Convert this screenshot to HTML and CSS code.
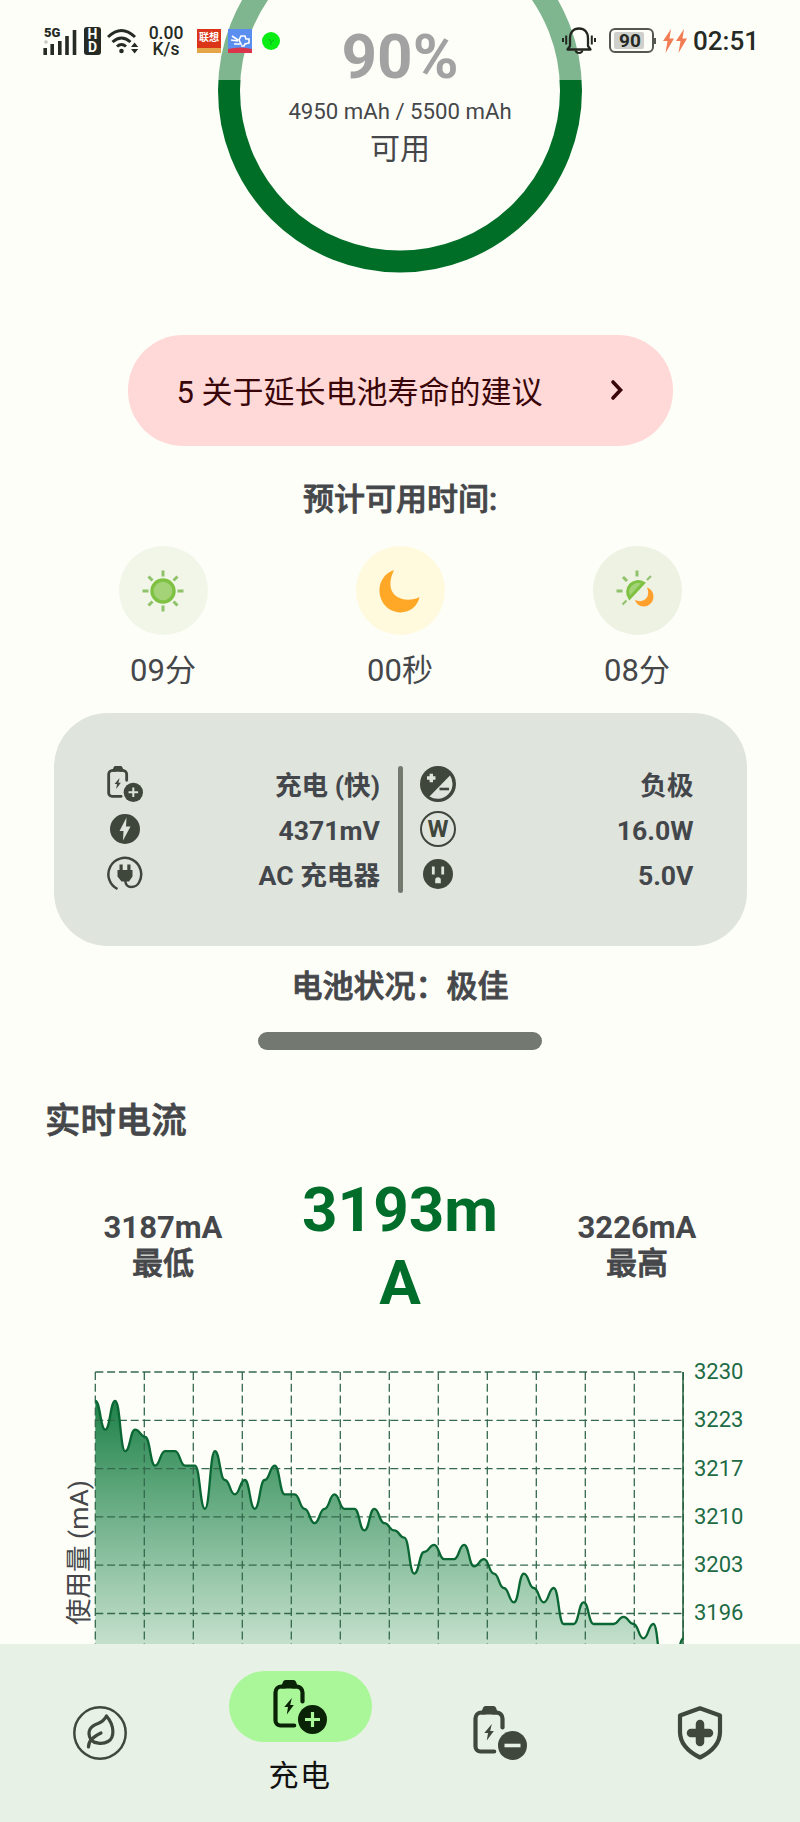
FILE: index.html
```html
<!DOCTYPE html>
<html lang="zh-CN">
<head>
<meta charset="utf-8">
<title>充电</title>
<link rel="stylesheet" href="styles.css">
</head>
<body>
<svg class="defs" width="0" height="0">
  <symbol id="battery" viewBox="0 0 54 54">
    <path d="M12 6.500H8.500a6 6 0 0 0-6 6v28a5 5 0 0 0 5 5h13.700M20 6.500h3.500a6 6 0 0 1 6 6v9" fill="none" stroke="currentColor" stroke-width="4.200" stroke-linecap="round"/>
    <path d="M8 8.500V5h.8L10 1.800A3 3 0 0 1 12.500 0h8A3 3 0 0 1 23 1.800L24.200 5h1.300v3.500z" fill="currentColor"/>
    <path d="M18.800 18l-7.500 9h3.700l-1.200 7.500 7-9.500h-3.600z" fill="currentColor"/>
    <circle cx="39.500" cy="39.500" r="14.500" fill="currentColor"/>
  </symbol>
</svg>
<div class="screen">
  <main class="page">
    <section class="gauge">
      <svg class="ring" width="800" height="290"><circle cx="400" cy="90.500" r="171" fill="none" stroke="#006e27" stroke-width="22"/></svg>
      <div class="percent">90%</div>
      <div class="capacity">4950 mAh / 5500 mAh</div>
      <div class="usable">可用</div>
    </section>

    <div class="tips"><span>5 关于延长电池寿命的建议</span>
      <svg width="14" height="22" viewBox="0 0 14 22"><path d="M3 3l7.500 8L3 19" fill="none" stroke="#3a0508" stroke-width="3.600" stroke-linecap="round"/></svg>
    </div>

    <h2 class="estimate">预计可用时间:</h2>
    <section class="times">
      <div class="time"><div class="disc sun">
        <svg width="44" height="44" viewBox="-22 -22 44 44"><g stroke="#8fc26a" stroke-width="3"><path d="M0-20.500v6M0 20.500v-6M-20.500 0h6M20.500 0h-6M-14.500-14.500l4 4M14.500 14.500l-4-4M-14.500 14.500l4-4M14.500-14.500l-4 4"/></g><circle r="11" fill="#a3d277" stroke="#7fc243" stroke-width="3.400"/></svg>
      </div><span>09分</span></div>
      <div class="time"><div class="disc moon">
        <svg width="44" height="44" viewBox="-22 -22 44 44"><path d="M-6-21C-25-14-24 9-11 18C2 26 17 19 19.500 6C6 13-19 7-6-21z" fill="#ffa726"/></svg>
      </div><span>00秒</span></div>
      <div class="time"><div class="disc mixed">
        <svg width="44" height="44" viewBox="-22 -22 44 44"><path d="M-7.500 7A10.500 10.500 0 0 1 6.500-8z" fill="#a3d277" stroke="#7fc243" stroke-width="3"/><path d="M0-20.500v6M-20.500 0h6M-14-14l4 4" stroke="#8fc26a" stroke-width="3"/><path d="M-14.500 13.500l4-4M10-11l4-4" stroke="#8fc26a" stroke-width="2"/><path d="M10-3.500C20 0 18 15 7 15.500C2 15.500-1 12-2 9C7 13 14 6 10-3.500z" fill="#ff9f2c"/></svg>
      </div><span>08分</span></div>
    </section>

    <section class="card">
      <div class="facts">
        <div class="fact"><svg class="icon" width="36" height="36"><use href="#battery"/><path d="M26.300 21.500v9.600M21.500 26.300h9.600" stroke="#dfe4dc" stroke-width="2"/></svg><b>充电 (快)</b></div>
        <div class="fact"><svg class="icon" width="36" height="36" viewBox="-18 -18 36 36"><circle r="15" fill="currentColor"/><path d="M1.500-11.500L-5.500 2h4l-.500 9.500L5.500-2.500h-4.500z" fill="#dfe4dc"/></svg><b>4371mV</b></div>
        <div class="fact"><svg class="icon" width="36" height="36" viewBox="-18 -18 36 36"><path d="M-7.500 15A16.400 16.400 0 1 1 14 8.500C11 14 1 15.500.300 7" fill="none" stroke="currentColor" stroke-width="2.500"/><path d="M-7.500-4h2v-5.500h3.200V-4h4.600v-5.500h3.200V-4h2V2.500L4 7.500h-7.500l-4-5z" fill="currentColor"/></svg><b>AC 充电器</b></div>
      </div>
      <i class="divider"></i>
      <div class="facts">
        <div class="fact"><svg class="icon" width="36" height="36" viewBox="-18 -18 36 36"><circle r="18" fill="currentColor"/><path d="M12-8.500A15 15 0 0 1-8.500 12.500z" fill="#dfe4dc"/><path d="M1.500 5h9.500" stroke="currentColor" stroke-width="2.600"/><path d="M-11-6h8.500M-6.700-10.200v8.500" stroke="#dfe4dc" stroke-width="3.400"/></svg><b>负极</b></div>
        <div class="fact"><span class="watt">W</span><b>16.0W</b></div>
        <div class="fact"><svg class="icon" width="36" height="36" viewBox="-18 -18 36 36"><circle r="15" fill="currentColor"/><path d="M-4.700-7.500V.500M4.700-7.500V.500" stroke="#dfe4dc" stroke-width="2.800"/><path d="M-2.800 9.300V6a2.800 2.800 0 0 1 5.600 0v3.300z" fill="#dfe4dc"/></svg><b>5.0V</b></div>
      </div>
    </section>

    <h2 class="health">电池状况：极佳</h2>
    <div class="healthbar"></div>

    <h1 class="section">实时电流</h1>
    <section class="current">
      <div class="bound">3187mA<br><span>最低</span></div>
      <div class="now">3193mA</div>
      <div class="bound">3226mA<br><span>最高</span></div>
    </section>

    <section class="chart">
      <div class="unit">使用量 (mA)</div>
      <svg class="plot" width="592" height="284" viewBox="93 1360 592 284">
        <defs><linearGradient id="fade" gradientUnits="userSpaceOnUse" x1="0" y1="1400" x2="0" y2="1644"><stop offset="0" stop-color="#007030" stop-opacity=".88"/><stop offset="1" stop-color="#087b3b" stop-opacity=".23"/></linearGradient></defs>
        <path id="area" fill="url(#fade)"/>
        <path id="grid" fill="none" stroke="#34694d" stroke-width="1.300" stroke-dasharray="8 3.800"/>
        <path d="M683 1372V1644" stroke="#23613f" stroke-width="1.500"/>
        <path id="line" fill="none" stroke="#0a6633" stroke-width="2.300"/>
      </svg>
      <div class="scale"><span>3230</span><span>3223</span><span>3217</span><span>3210</span><span>3203</span><span>3196</span></div>
    </section>
  </main>

  <header class="status">
    <div class="left">
      <div class="signal"><small>5G</small><svg width="34" height="28" viewBox="0 0 34 28"><path d="M2.200 21v7M9.200 17v11M16.800 14v14M24 9v19M31.500 3v25" stroke="#262a24" stroke-width="3.600"/><circle cx="3" cy="15" r="1.800" fill="#c4c6c0"/></svg></div>
      <div class="hd"><span>H</span><span>D</span></div>
      <svg class="wifi" width="32" height="28" viewBox="0 0 32 28"><g fill="none" stroke="#262a24" stroke-width="3"><path d="M1 10Q14.500-3 28 10M5.500 15Q14.500 7 23.500 15M10 19.500Q14.500 15.500 19 19.500" /></g><circle cx="14.500" cy="24" r="2.300" fill="#262a24"/><path d="M24 20l3.600-4.500 3.600 4.500zM24 22l3.600 4.500 3.600-4.500z" fill="#262a24"/></svg>
      <div class="rate"><span>0.00</span><span>K/s</span></div>
      <div class="app red"><span>联想</span></div>
      <div class="app blue"><svg width="24" height="24"><path d="M4 7l6 4M3 11l7 1M6 15h7l-2-4 2-4h4l1 3h3v4l-4 1-1 2h-3" fill="none" stroke="#fff" stroke-width="1.600"/><path d="M0 20q12-3 24 0v4H0z" fill="#d9364c"/></svg></div>
      <svg class="dot" width="18" height="18"><circle cx="9" cy="9" r="9" fill="#0aed14"/><path d="M7 7l2 3 3-2M9 10v3" stroke="#09b41b" fill="none"/></svg>
    </div>
    <div class="right">
      <svg width="34" height="28" viewBox="0 0 34 28"><path d="M5.500 22.500L8 19v-7.500C8 5 11.500 1.500 17 1.500S26 5 26 11.500V19l2.500 3.500z" fill="none" stroke="#22261f" stroke-width="2.300" stroke-linejoin="round"/><path d="M13.500 23.500a3.700 3.700 0 0 0 7 0M4.200 8.500v9M1 11v4M29.800 8.500v9M33 11v4" fill="none" stroke="#22261f" stroke-width="2"/></svg>
      <div class="battery"><span>90</span></div>
      <svg class="bolts" width="24" height="24" viewBox="0 0 24 24"><path d="M8 0L0 12h4.500L2.500 24 11 9.500H6.500zM21 0L13 12h4.500l-2 12L24 9.500h-4.500z" fill="#f27d55"/></svg>
      <time>02:51</time>
    </div>
  </header>

  <nav class="nav">
    <a><svg width="54" height="54" viewBox="-27 -27 54 54"><g fill="none" stroke="currentColor"><circle r="25.700" stroke-width="2.500"/><path d="M-11.500 14C-11.500 8-8 4.500 1 0M-9 7C-14-2-9-7-2-9.500Q4-12 6.500-17C15-7 14.500 5 8 8.500C2 12-6 10-9 7" stroke-width="3.200" stroke-linecap="round" stroke-linejoin="round"/></g></svg></a>
    <a class="active"><span class="pill"><svg width="54" height="54"><use href="#battery"/><path d="M39.500 32v15M32 39.500h15" stroke="#a9f798" stroke-width="3.200"/></svg></span><em>充电</em></a>
    <a><svg width="54" height="54"><use href="#battery"/><path d="M31.500 39.500h16" stroke="#e8f1e6" stroke-width="3.600"/></svg></a>
    <a><svg width="54" height="54"><path d="M27 2.300L47 9.500V26C47 37.500 38 46 27 51.500C16 46 7 37.500 7 26V9.500z" fill="none" stroke="currentColor" stroke-width="4.200" stroke-linejoin="round"/><path d="M27 18v18M18 27h18" stroke="currentColor" stroke-width="8.500" stroke-linecap="round"/></svg></a>
  </nav>
</div>
<script src="chart.js"></script>
</body>
</html>
```

FILE: styles.css
```css
* { box-sizing: border-box; }
body { margin: 0; background: #fdfef8; color: #45474a; font-family: Roboto, "Noto Sans CJK SC", sans-serif; }
h1, h2 { margin: 0; font-weight: 500; -webkit-text-stroke: .8px currentColor; }
svg { display: block; flex: none; }
.defs { position: absolute; }
.screen { position: relative; width: 800px; height: 1822px; overflow: hidden; }
.page { display: flex; flex-direction: column; align-items: center; }

.gauge { position: relative; width: 800px; height: 335px; padding-top: 22px; text-align: center; }
.ring { position: absolute; left: 0; top: 0; }
.percent { font-size: 62px; line-height: 70px; font-weight: 700; }
.capacity { font-size: 22.200px; line-height: 38px; }
.usable { font-size: 30px; line-height: 37px; }

.tips { display: flex; justify-content: space-between; align-items: center; width: 545px; height: 111px; padding: 0 49px 2px; border-radius: 55px; background: #ffd9d7; color: #3a0508; font-size: 31px; }
.estimate { margin-top: 34px; font-size: 31px; line-height: 40px; }
.times, .current { display: flex; width: 711px; }
.times { margin-top: 26px; }
.time { flex: 1; display: flex; flex-direction: column; align-items: center; gap: 16px; font-size: 31px; line-height: 40px; }
.disc { width: 89px; height: 89px; border-radius: 50%; display: flex; align-items: center; justify-content: center; }
.sun { background: #f1f6e9; }
.moon { background: #fffadd; }
.mixed { background: #edf2e2; }

.card { display: flex; width: 693px; height: 233px; margin-top: 22px; padding: 53px; border-radius: 54px; background: #dfe4dc; }
.facts { flex: 1; display: flex; flex-direction: column; gap: 9px; }
.fact { height: 36px; display: flex; align-items: center; justify-content: space-between; color: #3f463c; }
.fact b { padding-top: 4px; color: #43464a; font-size: 26.600px; line-height: 36px; font-weight: 700; }
.divider { width: 5px; height: 127px; margin: 0 17px 0 18px; border-radius: 3px; background: #73796f; }
.watt { width: 36px; height: 36px; border: 2px solid; border-radius: 50%; font-size: 24px; line-height: 32px; font-weight: 700; text-align: center; }

.health { margin-top: 21px; font-size: 31px; line-height: 40px; }
.healthbar { width: 284px; height: 18px; margin-top: 25px; border-radius: 9px; background: #737970; }
.section { align-self: flex-start; margin: 51px 0 0 45px; font-size: 35.400px; line-height: 40px; }
.current { margin-top: 25px; height: 160px; align-items: center; }
.current > * { flex: none; width: 237px; text-align: center; }
.bound { font-size: 31px; line-height: 36.500px; font-weight: 700; }
.bound span { font-weight: 500; -webkit-text-stroke: .8px currentColor; }
.now { padding: 0 18px; color: #006d2a; font-size: 62px; line-height: 73px; font-weight: 700; word-break: break-all; }

.chart { display: flex; width: 800px; height: 284px; margin-top: 34px; padding-left: 65px; }
.unit { width: 28px; height: 265px; font-size: 26.500px; line-height: 28px; writing-mode: vertical-rl; text-orientation: sideways; transform: rotate(180deg); }
.scale { display: flex; flex-direction: column; margin: -12px 0 0 9px; color: #1d6b45; font-size: 22px; line-height: 48.300px; }

.status { position: absolute; left: 0; top: 0; width: 800px; height: 80px; display: flex; justify-content: space-between; padding: 26px 41px 0 43px; background: rgba(253, 254, 248, .5); color: #262a24; }
.left, .right { display: flex; align-items: center; height: 29px; }
.signal { position: relative; }
.signal small { position: absolute; left: 1px; top: 0; font-size: 13px; line-height: 11px; font-weight: 900; }
.hd { width: 17px; height: 28px; margin: 0 6px 0 7px; padding: 1px 0; border-radius: 3px; background: #262a24; color: #fdfef8; font-size: 14px; line-height: 13px; font-weight: 700; text-align: center; display: flex; flex-direction: column; }
.rate { display: flex; flex-direction: column; width: 36px; margin-left: 9px; font-size: 17.500px; line-height: 16px; font-weight: 500; text-align: center; }
.app { width: 24px; height: 24px; }
.red { margin-left: 13px; background: #da3519; border-bottom: 5px solid #e5a548; color: #fff; font-size: 10px; line-height: 18px; font-weight: 700; text-align: center; }
.blue { margin-left: 7px; background: #5a8ff0; }
.dot { margin-left: 10px; }
.battery { position: relative; width: 45px; height: 25px; margin-left: 13px; padding: 2px 8px 2px 3px; border: 2px solid #555852; border-radius: 6px; font-size: 19px; line-height: 17px; font-weight: 700; }
.battery span { display: block; padding-left: 5px; background: #cfd0cc; border-radius: 2px; }
.battery::after { content: ""; position: absolute; right: -4px; top: 8px; width: 2px; height: 6px; background: #555852; }
.bolts { margin: 0 6px 0 9px; }
.right time { font-size: 26px; line-height: 28px; font-weight: 500; }

.nav { position: absolute; left: 0; bottom: 0; width: 800px; height: 178px; display: flex; background: #e8f1e6; color: #40483e; }
.nav a { flex: 1; display: flex; flex-direction: column; align-items: center; justify-content: center; }
.nav .active { justify-content: flex-start; padding-top: 27px; color: #0a2306; }
.pill { display: flex; align-items: center; justify-content: center; width: 143px; height: 71px; border-radius: 36px; background: #a9f798; }
.nav em { margin-top: 14px; color: #111; font-size: 30px; line-height: 40px; font-style: normal; letter-spacing: 1.500px; }
```

FILE: chart.js
```
const samples = [3226, 3222, 3226, 3219, 3222, 3221, 3217, 3219, 3219, 3217, 3217, 3211, 3219, 3215, 3213, 3215, 3211, 3215, 3217, 3213, 3213, 3211, 3209, 3211, 3213, 3211, 3211, 3208, 3211, 3209, 3208, 3207, 3202, 3205, 3206, 3204, 3204, 3206, 3203, 3204, 3202, 3200, 3198, 3202, 3200, 3198, 3200, 3195, 3195, 3198, 3195, 3195, 3195, 3196, 3195, 3193, 3195, 3188, 3188, 3193];
const left = 95.3, top0 = 1372, width = 588;
const px = i => left + i * width / (samples.length - 1);
const py = v => top0 + (3230 - v) * 7.2;

let curve = `M${px(0)} ${py(samples[0])}`;
for (let i = 1; i < samples.length; i++) {
  const mid = (px(i - 1) + px(i)) / 2;
  curve += `C${mid} ${py(samples[i - 1])} ${mid} ${py(samples[i])} ${px(i)} ${py(samples[i])}`;
}
document.getElementById('line').setAttribute('d', curve);
document.getElementById('area').setAttribute('d', `${curve}V1720H${left}Z`);

let grid = '';
for (let c = 0; c <= 12; c++) grid += `M${left + c * 49} ${top0}V1644`;
for (let r = 0; r < 6; r++) grid += `M${left} ${top0 + r * 48.3}h${width}`;
document.getElementById('grid').setAttribute('d', grid);
```
